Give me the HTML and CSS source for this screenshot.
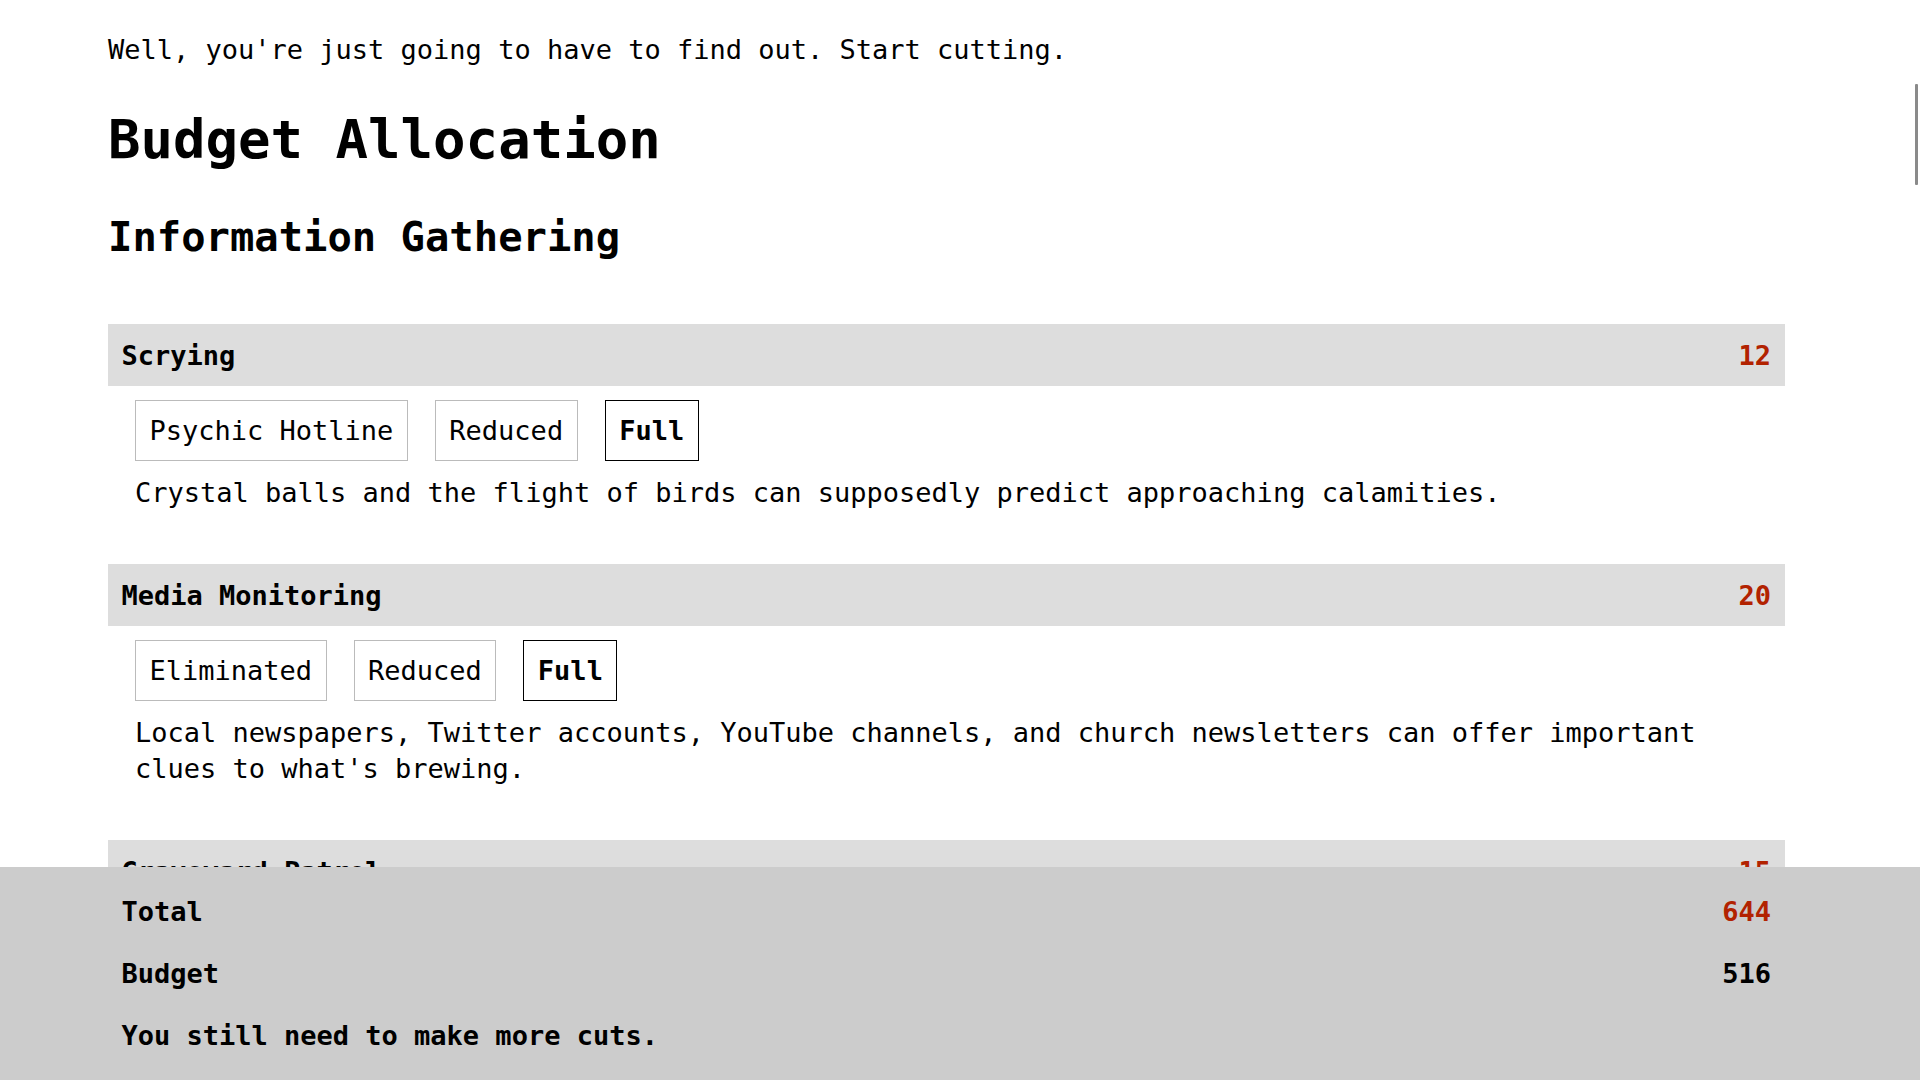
FILE: index.html
```html
<!DOCTYPE html>
<html lang="en">
<head>
<meta charset="utf-8">
<title>Budget Allocation</title>
<link rel="stylesheet" href="styles.css">
</head>
<body>
<main class="page">
  <p class="intro">Well, you're just going to have to find out. Start cutting.</p>
  <h1 class="title">Budget Allocation</h1>
  <h2 class="section-title">Information Gathering</h2>

  <section class="item">
    <div class="item-head"><span class="item-name">Scrying</span><span class="cost">12</span></div>
    <div class="options">
      <button class="opt">Psychic Hotline</button>
      <button class="opt">Reduced</button>
      <button class="opt selected">Full</button>
    </div>
    <p class="desc">Crystal balls and the flight of birds can supposedly predict approaching calamities.</p>
  </section>

  <section class="item">
    <div class="item-head"><span class="item-name">Media Monitoring</span><span class="cost">20</span></div>
    <div class="options">
      <button class="opt">Eliminated</button>
      <button class="opt">Reduced</button>
      <button class="opt selected">Full</button>
    </div>
    <p class="desc">Local newspapers, Twitter accounts, YouTube channels, and church newsletters can offer important clues to what's brewing.</p>
  </section>

  <section class="item">
    <div class="item-head"><span class="item-name">Graveyard Patrol</span><span class="cost">15</span></div>
    <div class="options">
      <button class="opt">Eliminated</button>
      <button class="opt">Reduced</button>
      <button class="opt selected">Full</button>
    </div>
    <p class="desc">Someone has to keep an eye on the old cemetery after dark, when the ground starts to stir.</p>
  </section>

  <section class="item">
    <div class="item-head"><span class="item-name">Informant Network</span><span class="cost">18</span></div>
    <div class="options">
      <button class="opt">Eliminated</button>
      <button class="opt">Reduced</button>
      <button class="opt selected">Full</button>
    </div>
    <p class="desc">Bartenders, cab drivers and night-shift nurses hear everything sooner or later.</p>
  </section>

  <h2 class="section-title">Containment</h2>

  <section class="item">
    <div class="item-head"><span class="item-name">Warding Circles</span><span class="cost">40</span></div>
    <div class="options">
      <button class="opt">Eliminated</button>
      <button class="opt">Reduced</button>
      <button class="opt selected">Full</button>
    </div>
    <p class="desc">Chalk, salt and a steady hand keep most things where they belong.</p>
  </section>

  <section class="item">
    <div class="item-head"><span class="item-name">Holding Cells</span><span class="cost">60</span></div>
    <div class="options">
      <button class="opt">Eliminated</button>
      <button class="opt">Reduced</button>
      <button class="opt selected">Full</button>
    </div>
    <p class="desc">Reinforced rooms for whatever gets caught before it can be sent back.</p>
  </section>
</main>

<footer class="summary">
  <div class="summary-inner">
    <div class="sum-row"><span>Total</span><span class="cost">644</span></div>
    <div class="sum-row"><span>Budget</span><span>516</span></div>
    <div class="sum-row"><span>You still need to make more cuts.</span></div>
  </div>
</footer>
<div class="scroll-thumb" aria-hidden="true"></div>
</body>
</html>
```

FILE: styles.css
```css
html, body {
  margin: 0;
  padding: 0;
  background: #fff;
}
body {
  font-family: "DejaVu Sans Mono", monospace;
  font-size: 27px;
  line-height: 36px;
  color: #000;
}
.page {
  width: 1677px;
  margin: 0 0 0 108px;
  padding-bottom: 260px;
}
.intro {
  margin: 32px 0 0;
}
.title {
  font-size: 54px;
  line-height: 72px;
  margin: 36px 0 0;
}
.section-title {
  font-size: 40.5px;
  line-height: 54px;
  margin: 34px 0 60px;
}
.item {
  margin-bottom: 53.5px;
}
.item-head {
  display: flex;
  justify-content: space-between;
  background: #ddd;
  line-height: 35px;
  padding: 13.5px 14px 13.5px 13.5px;
  font-weight: bold;
}
.cost {
  color: #b22200;
}
.options {
  display: flex;
  gap: 27px;
  margin: 14px 0 0 27px;
}
.opt {
  font-family: "DejaVu Sans Mono", monospace;
  font-size: 27px;
  line-height: 32px;
  padding: 13.5px;
  margin: 0;
  border: 1px solid #bbb;
  background: #fff;
  color: #000;
}
.opt.selected {
  border-color: #000;
  font-weight: bold;
}
.desc {
  margin: 13.5px 0 0 27px;
  padding-right: 27px;
}
.summary {
  position: fixed;
  left: 0;
  right: 0;
  bottom: 0;
  background: #ccc;
  padding: 13.5px 0;
  font-weight: bold;
}
.summary-inner {
  width: 1677px;
  margin-left: 108px;
}
.sum-row {
  display: flex;
  justify-content: space-between;
  line-height: 35px;
  padding: 13.5px 14px 13.5px 13.5px;
}
.scroll-thumb {
  position: fixed;
  top: 84px;
  right: 2px;
  width: 3px;
  height: 101px;
  background: #8a8a8a;
  border-radius: 1px;
}
```
